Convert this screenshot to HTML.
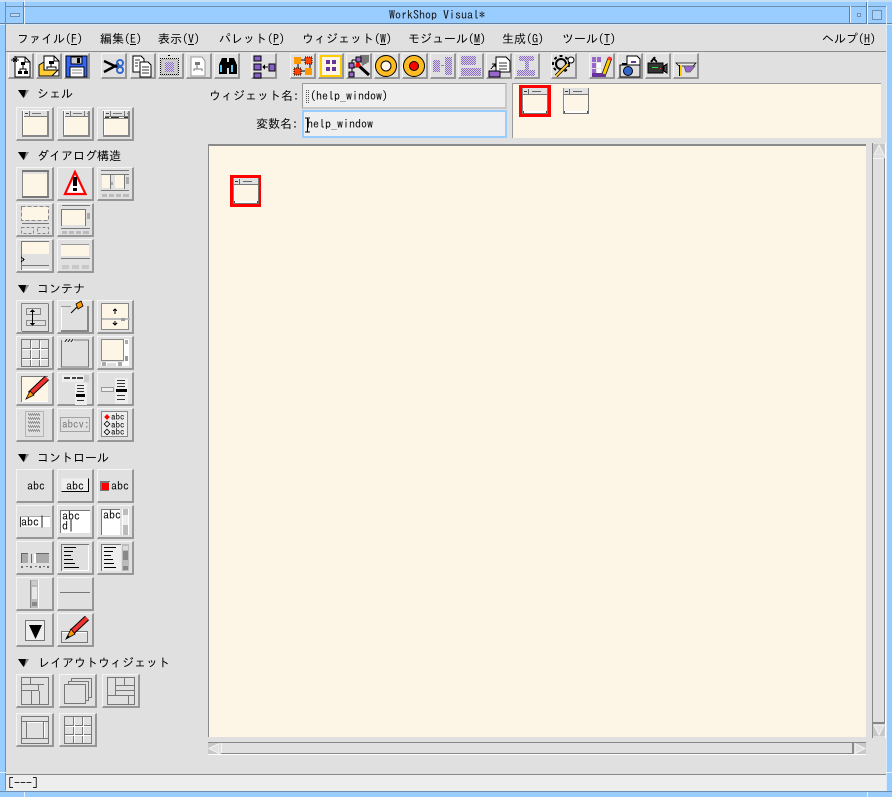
<!DOCTYPE html>
<html><head><meta charset="utf-8"><title>WorkShop Visual</title>
<style>
html,body{margin:0;padding:0;width:892px;height:797px;overflow:hidden;background:#99ccff}
*{box-sizing:border-box}
div{position:absolute}
.t{position:absolute;font:12px/14px "IPAGothic","Noto Sans CJK JP",sans-serif;color:#000;white-space:pre}
.b{position:absolute;background:#e0e0e0;border-style:solid;border-width:1px 2px 2px 1px;border-color:#f4f4f4 #969696 #969696 #f4f4f4;width:37px;height:34px}
.w{width:38px}
.k{top:53px;width:26px;height:26px}
svg{position:absolute;left:0;top:0}
</style></head><body>
<div style="left:0;top:0;width:892px;height:2px;background:#c4def5"></div>
<div style="left:0;top:23px;width:892px;height:1px;background:#62809e"></div>
<div style="left:0;top:24px;width:892px;height:1px;background:#d6e9fb"></div>
<div style="left:24px;top:0;width:1px;height:24px;background:#e6f2ff"></div>
<div style="left:23px;top:2px;width:1px;height:21px;background:#5f7f9f"></div>
<div style="left:6px;top:6px;width:880px;height:1px;background:#6d8fb1"></div>
<div style="left:5px;top:2px;width:1px;height:788px;background:#6d8fb1"></div>
<div style="left:886px;top:6px;width:1px;height:785px;background:#dcebfa"></div>
<div style="left:867px;top:0;width:1px;height:24px;background:#e6f2ff"></div>
<div style="left:866px;top:2px;width:1px;height:21px;background:#5f7f9f"></div>
<div style="left:850px;top:6px;width:1px;height:17px;background:#e6f2ff"></div>
<div style="left:849px;top:6px;width:1px;height:17px;background:#5f7f9f"></div>
<div style="left:10px;top:13px;width:10px;height:4px;background:#b9d9f7;border:1px solid #6d8fb1"></div>
<div style="left:857px;top:13px;width:4px;height:4px;background:#b9d9f7;border:1px solid #6d8fb1"></div>
<div style="left:872px;top:10px;width:10px;height:10px;background:#a9d3fb;border:1px solid #6d8fb1"></div>
<span class="t" style="left:389px;top:8px;color:#111">WorkShop Visual*</span>

<div style="left:6px;top:25px;width:880px;height:765px;background:#e0e0e0"></div>
<div style="left:6px;top:51px;width:880px;height:1px;background:#8a8a8a"></div>

<span class="t" style="left:17px;top:32px">ファイル(<u>F</u>)</span>
<span class="t" style="left:100px;top:32px">編集(<u>E</u>)</span>
<span class="t" style="left:158px;top:32px">表示(<u>V</u>)</span>
<span class="t" style="left:219px;top:32px">パレット(<u>P</u>)</span>
<span class="t" style="left:302px;top:32px">ウィジェット(<u>W</u>)</span>
<span class="t" style="left:408px;top:32px">モジュール(<u>M</u>)</span>
<span class="t" style="left:502px;top:32px">生成(<u>G</u>)</span>
<span class="t" style="left:562px;top:32px">ツール(<u>T</u>)</span>
<span class="t" style="left:822px;top:32px">ヘルプ(<u>H</u>)</span>

<div class="b k" style="left:8px"></div>
<div class="b k" style="left:36px"></div>
<div class="b k" style="left:64px"></div>
<div class="b k" style="left:101px"></div>
<div class="b k" style="left:130px"></div>
<div class="b k" style="left:158px"></div>
<div class="b k" style="left:186px"></div>
<div class="b k" style="left:214px"></div>
<div class="b k" style="left:251px"></div>
<div class="b k" style="left:290px"></div>
<div class="b k" style="left:318px"></div>
<div class="b k" style="left:346px"></div>
<div class="b k" style="left:374px"></div>
<div class="b k" style="left:402px"></div>
<div class="b k" style="left:430px"></div>
<div class="b k" style="left:458px"></div>
<div class="b k" style="left:486px"></div>
<div class="b k" style="left:514px"></div>
<div class="b k" style="left:551px"></div>
<div class="b k" style="left:589px"></div>
<div class="b k" style="left:617px"></div>
<div class="b k" style="left:645px"></div>
<div class="b k" style="left:673px"></div>

<span class="t" style="left:37px;top:87px">シェル</span>
<span class="t" style="left:37px;top:149px">ダイアログ構造</span>
<span class="t" style="left:37px;top:282px">コンテナ</span>
<span class="t" style="left:37px;top:451px">コントロール</span>
<span class="t" style="left:38px;top:656px">レイアウトウィジェット</span>

<div class="b w" style="left:16px;top:107px"></div>
<div class="b" style="left:57px;top:107px"></div>
<div class="b" style="left:97px;top:107px"></div>

<div class="b w" style="left:16px;top:167px"></div>
<div class="b" style="left:57px;top:167px"></div>
<div class="b" style="left:97px;top:167px"></div>
<div class="b w" style="left:16px;top:203px"></div>
<div class="b" style="left:57px;top:203px"></div>
<div class="b w" style="left:16px;top:239px"></div>
<div class="b" style="left:57px;top:239px"></div>

<div class="b w" style="left:16px;top:300px"></div>
<div class="b" style="left:57px;top:300px"></div>
<div class="b" style="left:97px;top:300px"></div>
<div class="b w" style="left:16px;top:336px"></div>
<div class="b" style="left:57px;top:336px"></div>
<div class="b" style="left:97px;top:336px"></div>
<div class="b w" style="left:16px;top:372px"></div>
<div class="b" style="left:57px;top:372px"></div>
<div class="b" style="left:97px;top:372px"></div>
<div class="b w" style="left:16px;top:408px"></div>
<div class="b" style="left:57px;top:408px"></div>
<div class="b" style="left:97px;top:408px"></div>

<div class="b w" style="left:16px;top:469px"></div>
<div class="b" style="left:57px;top:469px"></div>
<div class="b" style="left:97px;top:469px"></div>
<div class="b w" style="left:16px;top:505px"></div>
<div class="b" style="left:57px;top:505px"></div>
<div class="b" style="left:97px;top:505px"></div>
<div class="b w" style="left:16px;top:541px"></div>
<div class="b" style="left:57px;top:541px"></div>
<div class="b" style="left:97px;top:541px"></div>
<div class="b w" style="left:16px;top:577px"></div>
<div class="b" style="left:57px;top:577px"></div>
<div class="b w" style="left:16px;top:613px"></div>
<div class="b" style="left:57px;top:613px"></div>

<div class="b w" style="left:16px;top:674px"></div>
<div class="b w" style="left:59px;top:674px"></div>
<div class="b w" style="left:102px;top:674px"></div>
<div class="b w" style="left:16px;top:713px"></div>
<div class="b w" style="left:59px;top:713px"></div>

<span class="t" style="left:209px;top:89px">ウィジェット名:</span>
<span class="t" style="left:256px;top:117px">変数名:</span>
<div style="left:302px;top:83px;width:205px;height:26px;background:#efefef;border-style:solid;border-width:1px 2px 2px 1px;border-color:#9a9a9a #c8c8c8 #c8c8c8 #9a9a9a"></div>
<div style="left:302px;top:110px;width:205px;height:28px;background:#efefef;border:2px solid #99ccff"></div>
<span class="t" style="left:310px;top:89px">(help_window)</span>
<span class="t" style="left:307px;top:117px">help_window</span>

<div style="left:512px;top:83px;width:369px;height:55px;background:#fdf5e6;border-top:1px solid #999;border-left:1px solid #999"></div>
<div style="left:208px;top:144px;width:658px;height:593px;background:#fdf5e6;border-top:2px solid #8a8a8a;border-left:1px solid #8a8a8a"></div>
<div style="left:6px;top:774px;width:880px;height:17px;background:#eeeeee;border-top:1px solid #8a8a8a"></div>
<span class="t" style="left:8px;top:776px">[---]</span>

<svg width="892" height="797" viewBox="0 0 892 797" shape-rendering="crispEdges">
<defs>
<pattern id="st" width="2" height="2" patternUnits="userSpaceOnUse"><rect width="2" height="2" fill="#d8cfe8"/><rect width="1" height="1" fill="#8a6cc0"/><rect x="1" y="1" width="1" height="1" fill="#8a6cc0"/></pattern>
<pattern id="sg" width="2" height="2" patternUnits="userSpaceOnUse"><rect width="1" height="1" fill="#555"/><rect x="1" y="1" width="1" height="1" fill="#555"/></pattern>
<pattern id="so" width="2" height="2" patternUnits="userSpaceOnUse"><rect width="1" height="1" fill="#000"/><rect x="1" y="1" width="1" height="1" fill="#f90"/></pattern>
<g id="tri"><path d="M0 0H11L5.5 8Z" fill="#000" shape-rendering="auto"/><path d="M8 0H11L6 8Z" fill="#888" shape-rendering="auto"/></g>
<g id="win">
<rect x="6" y="3" width="27" height="27" fill="#fdf5e6"/>
<rect x="6" y="3" width="27" height="7" fill="#e0e0e0"/>
<rect x="6" y="3" width="27" height="1" fill="#fff"/>
<rect x="6" y="9" width="27" height="1" fill="#777"/>
<rect x="6" y="4" width="1" height="26" fill="#777"/>
<rect x="7" y="4" width="1" height="26" fill="#fff"/>
<rect x="31" y="4" width="2" height="26" fill="#888"/>
<rect x="6" y="28" width="27" height="2" fill="#888"/>
<rect x="9" y="6" width="3" height="1" fill="#444"/>
<rect x="13" y="4" width="1" height="5" fill="#777"/>
<rect x="16" y="6" width="9" height="1" fill="#777"/>
</g>
<g id="mw">
<rect x="0" y="0" width="26" height="26" fill="#fdf5e6"/>
<rect x="0" y="0" width="26" height="6" fill="#e0e0e0"/>
<rect x="0" y="6" width="26" height="1" fill="#777"/>
<rect x="0" y="0" width="1" height="26" fill="#888"/>
<rect x="1" y="7" width="1" height="19" fill="#fff"/>
<rect x="25" y="0" width="1" height="26" fill="#777"/>
<rect x="0" y="25" width="26" height="1" fill="#777"/>
<rect x="1" y="23" width="24" height="2" fill="#fff"/>
<rect x="2" y="3" width="3" height="1" fill="#333"/>
<rect x="6" y="1" width="1" height="5" fill="#666"/>
<rect x="10" y="3" width="9" height="1" fill="#666"/>
<rect x="1" y="23" width="1" height="2" fill="#444"/><rect x="24" y="23" width="1" height="2" fill="#444"/>
</g>
<g id="page"><path d="M0 0H10L15 5V20H0Z" fill="#fff" stroke="#000"/><path d="M10 0V5H15" fill="none" stroke="#000"/></g>
</defs>

<use href="#tri" x="18" y="90"/><use href="#tri" x="18" y="152"/><use href="#tri" x="18" y="285"/><use href="#tri" x="18" y="454"/><use href="#tri" x="18" y="659"/>

<g><use href="#page" x="15" y="57"/><rect x="21" y="62" width="4" height="3" fill="#000"/><rect x="18" y="71" width="4" height="3" fill="#000"/><rect x="24" y="71" width="4" height="3" fill="#000"/><path d="M23 65V69M20 71V69H26V71" fill="none" stroke="#000"/><path d="M15 56V64M11 60H19M13 58L17 62M17 58L13 62" stroke="#000" fill="none"/></g>
<g><use href="#page" x="44" y="56"/><rect x="49" y="61" width="5" height="3" fill="#000"/><path d="M51 64V67M47 69V67H56V69" fill="none" stroke="#000"/><path d="M39 76V65L44 62V70H58L52 76Z" fill="#fc3" stroke="#000" shape-rendering="auto"/></g>
<g><rect x="66" y="56" width="21" height="21" fill="#36f" stroke="#000"/><rect x="71" y="57" width="11" height="7" fill="#ccc" stroke="#000"/><rect x="77" y="58" width="3" height="5" fill="#000"/><rect x="70" y="67" width="14" height="10" fill="#fff" stroke="#000"/><path d="M72 70H82M72 73H82" stroke="#888"/></g>
<g shape-rendering="auto"><path d="M104 61L119 68M104 72L119 64" stroke="#000" stroke-width="2.5" fill="none"/><circle cx="120" cy="63" r="3" fill="none" stroke="#36c" stroke-width="2"/><circle cx="120" cy="70" r="3" fill="none" stroke="#36c" stroke-width="2"/></g>
<g><path d="M133 56H141L144 59V72H133Z" fill="#fff" stroke="#000"/><path d="M140 62H148L151 65V77H140Z" fill="#fff" stroke="#000"/><path d="M142 67H149M142 70H149M142 73H149" stroke="#333"/><path d="M135 60H140M135 63H138M135 66H138" stroke="#333"/></g>
<g><rect x="161" y="59" width="17" height="16" fill="#ccc"/><rect x="165" y="62" width="9" height="10" fill="url(#st)"/><rect x="161" y="59" width="17" height="16" fill="none" stroke="url(#so)" stroke-width="2"/><rect x="168" y="55" width="2" height="1" fill="#000"/></g>
<g><path d="M191 57H202L205 61V76H191Z" fill="#fff" stroke="#999"/><rect x="195" y="62" width="5" height="3" fill="#777"/><path d="M197 65V69M194 71V69H202V71" fill="none" stroke="#777"/></g>
<g><path d="M219 74V65L222 58H227V74ZM229 74V58H234L237 65V74H229Z" fill="#000"/><rect x="227" y="62" width="2" height="6" fill="#000"/><rect x="220" y="65" width="2" height="7" fill="#5ac8f0"/><rect x="231" y="65" width="2" height="7" fill="#5ac8f0"/></g>
<g fill="#8a5fc8" stroke="#000"><rect x="254" y="56" width="7" height="5"/><rect x="254" y="64" width="7" height="6"/><rect x="254" y="73" width="7" height="5"/><rect x="269" y="64" width="6" height="7"/></g><path d="M263 67H268" stroke="#000"/><path d="M262 67L265 64V70Z" fill="#000"/>

<g><path d="M298 60H310M298 60V71M298 71H310M310 60V71" stroke="#000" fill="none"/><rect x="294" y="57" width="7" height="7" fill="#f90"/><rect x="305" y="57" width="7" height="7" fill="#f40" stroke="#000" stroke-dasharray="1"/><rect x="294" y="68" width="7" height="7" fill="#f40" stroke="#000" stroke-dasharray="1"/><rect x="305" y="68" width="7" height="7" fill="#f90"/></g>
<g><rect x="321" y="56" width="20" height="20" fill="#fdf5e6" stroke="#fc0" stroke-width="2"/><rect x="326" y="60" width="4" height="4" fill="#639"/><rect x="332" y="60" width="4" height="4" fill="#639"/><rect x="326" y="67" width="4" height="4" fill="#639"/><rect x="332" y="67" width="4" height="4" fill="#639"/></g>
<g><path d="M360 55H369V62L362 66Z" fill="#777"/><path d="M352 60V74M352 60H360M352 67H358" stroke="#000" fill="none"/><rect x="349" y="63" width="5" height="5" fill="#96c" stroke="#000"/><rect x="349" y="72" width="5" height="5" fill="#96c" stroke="#000"/><rect x="356" y="57" width="5" height="5" fill="#96c" stroke="#000"/><path d="M358 65L369 75" stroke="#000" stroke-width="3" shape-rendering="auto"/><circle cx="358" cy="65" r="2.5" fill="#f00" shape-rendering="auto"/></g>
<g shape-rendering="auto"><circle cx="386" cy="66" r="10.5" fill="#fb2" stroke="#000"/><circle cx="386" cy="66" r="5" fill="#fdf5e6" stroke="#000"/></g>
<g shape-rendering="auto"><circle cx="414" cy="66" r="10.5" fill="#fb2" stroke="#000"/><circle cx="414" cy="66" r="4.5" fill="#f00" stroke="#000"/></g>
<g><rect x="433" y="60" width="7" height="12" fill="url(#st)"/><rect x="445" y="57" width="7" height="18" fill="url(#st)"/><rect x="441" y="65" width="3" height="1" fill="#888"/></g>
<g><rect x="461" y="56" width="15" height="9" fill="url(#st)"/><rect x="461" y="68" width="20" height="8" fill="url(#st)"/></g>
<g><path d="M496 57H506L510 61V72H496Z" fill="#fff" stroke="#000"/><path d="M499 63H507M499 66H507M499 69H507" stroke="#333"/><rect x="489" y="71" width="11" height="6" fill="#96c" stroke="#000"/><path d="M491 69L495 64M492 64H495V67" stroke="#000" fill="none"/></g>
<g><rect x="519" y="56" width="15" height="5" fill="url(#st)"/><rect x="525" y="61" width="4" height="9" fill="url(#st)"/><rect x="517" y="70" width="18" height="6" fill="url(#st)"/></g>
<g shape-rendering="auto"><circle cx="561" cy="64" r="5" fill="#ddd" stroke="#000" stroke-width="2"/><circle cx="561" cy="64" r="8" fill="none" stroke="#000" stroke-width="2" stroke-dasharray="3 3"/><path d="M556 76L568 64" stroke="#000" stroke-width="3.5"/><path d="M556 76L568 64" stroke="#fc3" stroke-width="2"/><circle cx="571" cy="60" r="3" fill="#fff" stroke="#000"/></g>
<g><rect x="592" y="57" width="4" height="5" fill="#96c"/><rect x="597" y="57" width="4" height="5" fill="#96c"/><rect x="592" y="63" width="4" height="5" fill="#96c"/><rect x="597" y="63" width="4" height="5" fill="#fff"/><rect x="592" y="69" width="4" height="4" fill="#96c"/><rect x="597" y="69" width="4" height="4" fill="#fff"/><rect x="592" y="73" width="14" height="4" fill="#639"/><g shape-rendering="auto"><path d="M604 74L610 58" stroke="#000" stroke-width="4.5"/><path d="M604 74L610 58" stroke="#fc0" stroke-width="3"/><path d="M609 60L610.5 57" stroke="#f33" stroke-width="3.5"/></g></g>
<g><path d="M627 56H637L640 59V71H627Z" fill="#fff" stroke="#000"/><rect x="631" y="61" width="5" height="2" fill="#639"/><rect x="636" y="65" width="3" height="4" fill="#639"/><rect x="620" y="65" width="20" height="12" fill="#ddd" stroke="#000"/><rect x="622" y="63" width="5" height="2" fill="#000"/><circle cx="628" cy="71" r="4.5" fill="#36c" stroke="#000" shape-rendering="auto"/></g>
<g><rect x="648" y="63" width="15" height="10" fill="#333" stroke="#000"/><rect x="652" y="67" width="6" height="1" fill="#3d3"/><rect x="660" y="68" width="1" height="1" fill="#f33"/><path d="M664 66L667 64V73L664 71Z" fill="#555" stroke="#000"/><path d="M651 62L655 57M653 58L657 62" stroke="#000" stroke-width="2"/></g>
<g shape-rendering="auto"><path d="M676 63H696L693 66H679Z" fill="#eee" stroke="#000" stroke-width=".8"/><path d="M684 66H695L690 72H686Z" fill="#96c" stroke="#555" stroke-width=".8"/><rect x="680" y="65" width="2" height="11" fill="#fc0"/><rect x="679" y="65" width="1" height="11" fill="#000"/></g>

<use href="#win" x="16" y="107"/><use href="#win" x="57" y="107"/><use href="#win" x="97" y="107"/>
<g fill="#777"><rect x="84" y="111" width="1" height="5"/><rect x="87" y="113" width="2" height="1"/><rect x="124" y="111" width="1" height="5"/><rect x="127" y="113" width="2" height="1"/></g>
<rect x="105" y="117" width="4" height="1" fill="#333"/><rect x="111" y="117" width="8" height="1" fill="#333"/><rect x="124" y="117" width="4" height="1" fill="#333"/><rect x="104" y="118" width="25" height="1" fill="#888"/>

<rect x="22" y="172" width="27" height="24" fill="#fdf5e6"/><rect x="22" y="170" width="27" height="2" fill="#777"/><rect x="22" y="172" width="1" height="25" fill="#888"/><rect x="47" y="172" width="2" height="25" fill="#888"/><rect x="22" y="196" width="27" height="2" fill="#777"/><rect x="23" y="172" width="24" height="2" fill="#e0e0e0"/>
<path d="M75 172L85.5 194H65Z" fill="#fff" stroke="#f00" stroke-width="2.2" shape-rendering="auto"/><rect x="73" y="177" width="4" height="9" fill="#000"/><rect x="73" y="188" width="4" height="3" fill="#000"/>
<g><rect x="101" y="170" width="28" height="1" fill="#777"/><rect x="101" y="174" width="28" height="1" fill="#777"/><rect x="102" y="175" width="8" height="13" fill="#fdf5e6"/><rect x="115" y="175" width="9" height="13" fill="#fdf5e6"/><rect x="110" y="175" width="1" height="14" fill="#777"/><rect x="124" y="175" width="1" height="14" fill="#777"/><rect x="111" y="182" width="2" height="3" fill="#aaa"/><rect x="126" y="177" width="3" height="7" fill="#aaa"/><rect x="101" y="190" width="28" height="1" fill="#777"/><rect x="102" y="194" width="5" height="3" fill="#bbb"/><rect x="109" y="194" width="5" height="3" fill="#bbb"/><rect x="116" y="194" width="5" height="3" fill="#bbb"/><rect x="123" y="194" width="6" height="3" fill="#bbb"/></g>

<rect x="22" y="207" width="27" height="13" fill="#fdf5e6"/><rect x="21.5" y="206.5" width="27" height="14" fill="none" stroke="#888" stroke-dasharray="4 2"/><rect x="22" y="223" width="27" height="1" fill="#777"/><rect x="21.5" y="227.5" width="12" height="6" fill="none" stroke="#888" stroke-dasharray="3 2"/><rect x="37.5" y="227.5" width="11" height="6" fill="none" stroke="#888" stroke-dasharray="3 2"/>
<g><rect x="62" y="205" width="28" height="1" fill="#777"/><rect x="62" y="209" width="23" height="16" fill="#fdf5e6"/><rect x="61" y="209" width="24" height="1" fill="#777"/><rect x="61" y="209" width="1" height="17" fill="#777"/><rect x="85" y="209" width="1" height="17" fill="#777"/><rect x="87" y="213" width="3" height="6" fill="#aaa"/><rect x="61" y="228" width="29" height="1" fill="#777"/><rect x="62" y="231" width="5" height="3" fill="#bbb"/><rect x="69" y="231" width="5" height="3" fill="#bbb"/><rect x="76" y="231" width="5" height="3" fill="#bbb"/><rect x="83" y="231" width="6" height="3" fill="#bbb"/></g>

<rect x="22" y="242" width="27" height="12" fill="#fdf5e6"/><rect x="21" y="242" width="1" height="28" fill="#777"/><rect x="21" y="241" width="28" height="1" fill="#777"/><path d="M21 257L24 259.5 21 262" fill="none" stroke="#000"/><rect x="22" y="265" width="27" height="1" fill="#777"/><rect x="22" y="269" width="27" height="1" fill="#fff"/>
<rect x="61" y="245" width="28" height="11" fill="#fdf5e6"/><rect x="61" y="244" width="28" height="1" fill="#999"/><rect x="61" y="258" width="29" height="1" fill="#777"/><rect x="62" y="265" width="7" height="4" fill="#c8c8c8"/><rect x="72" y="265" width="7" height="4" fill="#c8c8c8"/><rect x="82" y="265" width="7" height="4" fill="#c8c8c8"/>

<g fill="none" stroke="#888"><path d="M21.5 331V303.5H48.5"/><path d="M48.5 304V331.5H22" stroke="#777"/><rect x="26.5" y="308.5" width="14" height="6"/><rect x="26.5" y="320.5" width="19" height="5"/></g><rect x="32" y="311" width="1" height="13" fill="#000"/><path d="M30 312L32.5 309L35 312ZM30 323L32.5 326L35 323Z" fill="#000"/>
<rect x="61" y="306" width="1" height="25" fill="#fff"/><rect x="61" y="306" width="10" height="1" fill="#999"/><rect x="61" y="330" width="28" height="2" fill="#888"/><rect x="87" y="306" width="2" height="25" fill="#888"/><g shape-rendering="auto"><path d="M71 313L77 307" stroke="#000"/><path d="M76 304L81 301L83 306L78 309Z" fill="#f90" stroke="#000" stroke-width=".8"/></g>
<rect x="101.5" y="303.5" width="27" height="26" fill="#fdf5e6" stroke="#888"/><rect x="102" y="318" width="28" height="2" fill="#bbb"/><rect x="121" y="318" width="4" height="3" fill="#999"/><path d="M115 314V309M113 311L115 309 117 311M115 321V325M113 323L115 325 117 323" fill="none" stroke="#000"/>

<g fill="none" stroke="#777"><rect x="21.5" y="339.5" width="27" height="27"/><path d="M22 348.5H48M22 358.5H48M30.5 340V366M39.5 340V366"/></g><path d="M22 349.5H48M22 359.5H48M31.5 341V366M40.5 341V366" stroke="#fff" fill="none"/>
<g fill="none"><path d="M61.5 340V367H88.5V340H74" stroke="#777"/><path d="M65 342L67 339M68 342L70 339M71 342L73 339" stroke="#333"/></g>
<rect x="101.5" y="339.5" width="22" height="21" fill="#fdf5e6" stroke="#888"/><rect x="124" y="339" width="5" height="27" fill="#fff"/><rect x="125" y="340" width="3" height="4" fill="#aaa"/><rect x="125" y="356" width="3" height="5" fill="#999"/><rect x="101" y="362" width="27" height="4" fill="#fff"/><rect x="102" y="362" width="4" height="4" fill="#aaa"/><rect x="107" y="363" width="9" height="3" fill="#ddd"/><rect x="118" y="362" width="4" height="4" fill="#aaa"/>

<rect x="21" y="376" width="27" height="26" fill="#fdf5e6"/><rect x="21" y="376" width="27" height="1" fill="#777"/><rect x="21" y="376" width="1" height="26" fill="#777"/><rect x="22" y="401" width="26" height="1" fill="#fff"/>
<g shape-rendering="auto"><path d="M30 394L47 378" stroke="#000" stroke-width="6"/><path d="M30 394L47 378" stroke="#e33" stroke-width="4"/><path d="M26 399L30 391L34 395Z" fill="#f90" stroke="#000" stroke-width=".8"/></g>
<rect x="62" y="375" width="24" height="7" fill="#eee"/><rect x="64" y="377" width="6" height="2" fill="#444"/><rect x="72" y="377" width="4" height="2" fill="#444"/><rect x="77" y="377" width="6" height="2" fill="#444"/><rect x="84" y="375" width="5" height="7" fill="#ccc"/><rect x="75" y="383" width="12" height="22" fill="#eee"/><rect x="77" y="385" width="7" height="1" fill="#333"/><rect x="77" y="388" width="7" height="1" fill="#333"/><rect x="77" y="391" width="7" height="1" fill="#333"/><rect x="76" y="394" width="9" height="3" fill="#000"/><rect x="77" y="400" width="7" height="1" fill="#333"/>
<rect x="101.5" y="387.5" width="12" height="4" fill="#eee" stroke="#999"/><rect x="115" y="378" width="13" height="26" fill="#eee"/><rect x="117" y="380" width="8" height="1" fill="#333"/><rect x="117" y="383" width="8" height="1" fill="#333"/><rect x="117" y="386" width="8" height="1" fill="#333"/><rect x="116" y="389" width="11" height="3" fill="#000"/><rect x="117" y="395" width="8" height="1" fill="#333"/><rect x="117" y="399" width="8" height="1" fill="#333"/>

<rect x="25.5" y="411.5" width="18" height="25" fill="none" stroke="#888" stroke-dasharray="1 1"/><g stroke="#555" stroke-dasharray="1 1"><path d="M28 414H40M28 418H40M28 422H40M28 426H40M28 430H40"/><path d="M29 415H41M29 419H41M29 423H41M29 427H41M29 431H41"/></g>
<rect x="60.5" y="417.5" width="29" height="14" fill="none" stroke="#666" stroke-dasharray="1 1"/>
<rect x="101.5" y="411.5" width="26" height="25" fill="#eee" stroke="#888"/>
<rect x="105" y="415" width="4" height="4" fill="#f00" transform="rotate(45 107 417)" shape-rendering="auto"/><rect x="105" y="422" width="4" height="4" fill="none" stroke="#000" stroke-width=".8" transform="rotate(45 107 424)" shape-rendering="auto"/><rect x="105" y="430" width="4" height="4" fill="none" stroke="#000" stroke-width=".8" transform="rotate(45 107 432)" shape-rendering="auto"/>

<rect x="61.5" y="478.5" width="27" height="13" fill="#eee"/><path d="M61.5 491.5H88.5V478.5" fill="none" stroke="#000"/>
<rect x="100" y="481" width="10" height="10" fill="#777"/><rect x="102" y="483" width="7" height="7" fill="#f00"/><rect x="109" y="482" width="1" height="9" fill="#eee"/>

<rect x="20" y="516" width="30" height="11" fill="#fff"/><rect x="20" y="516" width="1" height="11" fill="#333"/><rect x="20" y="516" width="30" height="1" fill="#aaa"/>
<rect x="60" y="510" width="30" height="23" fill="#fff"/><rect x="60" y="510" width="30" height="1" fill="#777"/><rect x="60" y="510" width="1" height="23" fill="#777"/>
<rect x="101" y="509" width="19" height="26" fill="#fff"/><rect x="101" y="509" width="1" height="26" fill="#777"/><rect x="101" y="509" width="19" height="1" fill="#777"/><rect x="122" y="509" width="7" height="26" fill="#bbb"/><rect x="123" y="515" width="5" height="10" fill="#eee"/><rect x="122" y="509" width="1" height="26" fill="#fff"/><rect x="128" y="509" width="1" height="26" fill="#fff"/>

<rect x="21" y="553" width="28" height="10" fill="#aaa"/><rect x="21" y="553" width="28" height="1" fill="#666"/><rect x="21" y="553" width="1" height="10" fill="#666"/><rect x="28" y="553" width="8" height="10" fill="#ddd"/><rect x="31" y="554" width="1" height="9" fill="#666"/><rect x="34" y="554" width="2" height="9" fill="#fff"/>
<path d="M22 566V568M31 566V568M40 566V568M48 566V568M27 566V567M36 566V567M44 566V567" stroke="#000"/>
<rect x="61" y="544" width="28" height="1" fill="#777"/><rect x="61" y="544" width="1" height="27" fill="#777"/><rect x="62" y="570" width="27" height="1" fill="#fff"/><rect x="88" y="545" width="1" height="26" fill="#fff"/>
<g fill="#000"><rect x="64" y="547" width="12" height="1"/><rect x="64" y="551" width="9" height="1"/><rect x="64" y="555" width="7" height="1"/><rect x="64" y="559" width="9" height="1"/><rect x="64" y="563" width="11" height="1"/><rect x="64" y="567" width="15" height="1"/></g>
<rect x="101" y="544" width="20" height="27" fill="#eee"/><rect x="101" y="544" width="20" height="1" fill="#777"/><rect x="101" y="544" width="1" height="27" fill="#777"/><rect x="122" y="544" width="7" height="27" fill="#bbb"/><rect x="123" y="551" width="5" height="9" fill="#888"/><rect x="123" y="546" width="5" height="4" fill="#ddd"/><rect x="123" y="566" width="5" height="4" fill="#888"/>
<g fill="#000"><rect x="104" y="547" width="12" height="1"/><rect x="104" y="551" width="9" height="1"/><rect x="104" y="555" width="7" height="1"/><rect x="104" y="559" width="9" height="1"/><rect x="104" y="563" width="10" height="1"/><rect x="104" y="567" width="12" height="1"/></g>

<rect x="31" y="580" width="7" height="28" fill="#bbb"/><rect x="32" y="587" width="5" height="12" fill="#e8e8e8"/><rect x="32" y="581" width="5" height="4" fill="#ccc"/><rect x="32" y="602" width="5" height="4" fill="#888"/><rect x="30" y="580" width="1" height="28" fill="#888"/><rect x="38" y="580" width="1" height="28" fill="#fff"/>
<rect x="60" y="592" width="30" height="1" fill="#777"/>

<rect x="25.5" y="620.5" width="19" height="20" fill="#eee" stroke="#777"/><path d="M29 625H42L35.5 639Z" fill="#000" shape-rendering="auto"/>
<rect x="61.5" y="631.5" width="26" height="11" fill="#e0e0e0" stroke="#777"/><rect x="62" y="632" width="25" height="1" fill="#fff"/>
<g shape-rendering="auto"><path d="M72 632L87 618" stroke="#000" stroke-width="6"/><path d="M72 632L87 618" stroke="#e33" stroke-width="4"/><path d="M66 639L71 629L75 634Z" fill="#f90" stroke="#000" stroke-width=".8"/><path d="M66 639L68 635L70 637Z" fill="#000"/></g>

<g fill="none" stroke="#777"><rect x="21.5" y="677.5" width="27" height="27"/><path d="M22 684.5H44M30.5 678V684M22 690.5H38M38.5 685V691M31.5 691V704M39.5 691V704"/></g>
<g fill="#e0e0e0" stroke="#777"><rect x="71.5" y="678.5" width="20" height="19"/><rect x="68.5" y="681.5" width="20" height="19"/><rect x="64.5" y="684.5" width="21" height="19"/></g>
<g fill="none" stroke="#777"><rect x="107.5" y="677.5" width="27" height="27"/><path d="M115.5 678V695M115 685.5H134M116 690.5H134M108 695.5H134M128.5 696V704M124.5 678V685"/></g>

<g fill="none" stroke="#777"><rect x="21.5" y="716.5" width="27" height="27"/><path d="M22 721.5H48M26.5 722V738M43.5 722V738M22 738.5H48"/></g><path d="M27 722.5H43M44.5 722V738" stroke="#fff" fill="none"/>
<g fill="none" stroke="#777"><rect x="64.5" y="716.5" width="27" height="27"/><path d="M65 725.5H91M65 734.5H91M73.5 717V743M82.5 717V743"/></g><path d="M65 726.5H91M65 735.5H91M74.5 717V743M83.5 717V743" stroke="#fff" fill="none"/>

<rect x="306" y="89" width="1" height="14" fill="url(#sg)"/><rect x="308" y="89" width="1" height="14" fill="url(#sg)"/>
<path d="M305 118H310M307.5 118V132M305 132H310" stroke="#000" fill="none"/>

<rect x="519" y="85" width="32" height="32" fill="#f00"/><use href="#mw" x="522" y="88"/><use href="#mw" x="563" y="88"/>
<rect x="230" y="175" width="31" height="32" fill="#f00"/><use href="#mw" x="233" y="178"/>

<rect x="872" y="143" width="14" height="595" fill="#e0e0e0"/><rect x="872" y="143" width="1" height="595" fill="#888"/><rect x="885" y="143" width="1" height="595" fill="#fff"/>
<rect x="873" y="144" width="12" height="12" fill="#c8c8c8"/><path d="M879 145L884 155H874Z" fill="#e0e0e0" stroke="#f4f4f4" shape-rendering="auto"/>
<rect x="873" y="158" width="12" height="1" fill="#f4f4f4"/><rect x="884" y="158" width="1" height="565" fill="#888"/><rect x="873" y="722" width="12" height="2" fill="#888"/>
<rect x="873" y="724" width="12" height="12" fill="#c8c8c8"/><path d="M879 735L884 725H874Z" fill="#e0e0e0" stroke="#f4f4f4" shape-rendering="auto"/>

<rect x="208" y="742" width="658" height="13" fill="#e0e0e0"/><rect x="208" y="742" width="658" height="1" fill="#888"/><rect x="208" y="754" width="658" height="1" fill="#fff"/>
<rect x="208" y="743" width="12" height="11" fill="#c8c8c8"/><path d="M209 748.5L219 743.5V753.5Z" fill="#e0e0e0" stroke="#f4f4f4" shape-rendering="auto"/>
<rect x="221" y="743" width="1" height="11" fill="#f4f4f4"/><rect x="852" y="743" width="2" height="11" fill="#888"/><rect x="221" y="753" width="632" height="1" fill="#888"/>
<rect x="854" y="743" width="12" height="11" fill="#c8c8c8"/><path d="M865 748.5L855 743.5V753.5Z" fill="#e0e0e0" stroke="#f4f4f4" shape-rendering="auto"/>

<rect x="0" y="772" width="6" height="1" fill="#e6f2ff"/><rect x="24" y="791" width="1" height="6" fill="#e6f2ff"/><rect x="867" y="791" width="1" height="6" fill="#e6f2ff"/><rect x="886" y="772" width="6" height="1" fill="#e6f2ff"/>
<rect x="0" y="791" width="892" height="1" fill="#6d8fb1"/>
</svg>

<span class="t" style="left:27px;top:479px">abc</span>
<span class="t" style="left:66px;top:479px">abc</span>
<span class="t" style="left:111px;top:479px">abc</span>
<span class="t" style="left:21px;top:515px">abc|</span>
<span class="t" style="left:62px;top:509px">abc</span>
<span class="t" style="left:62px;top:519px">d|</span>
<span class="t" style="left:103px;top:508px">abc</span>
<span class="t" style="left:62px;top:418px;font-size:11px;color:#777">abcv:</span>
<span class="t" style="left:111px;top:414px;font-size:9px;line-height:7.5px">abc
abc
abc</span>
</body></html>
